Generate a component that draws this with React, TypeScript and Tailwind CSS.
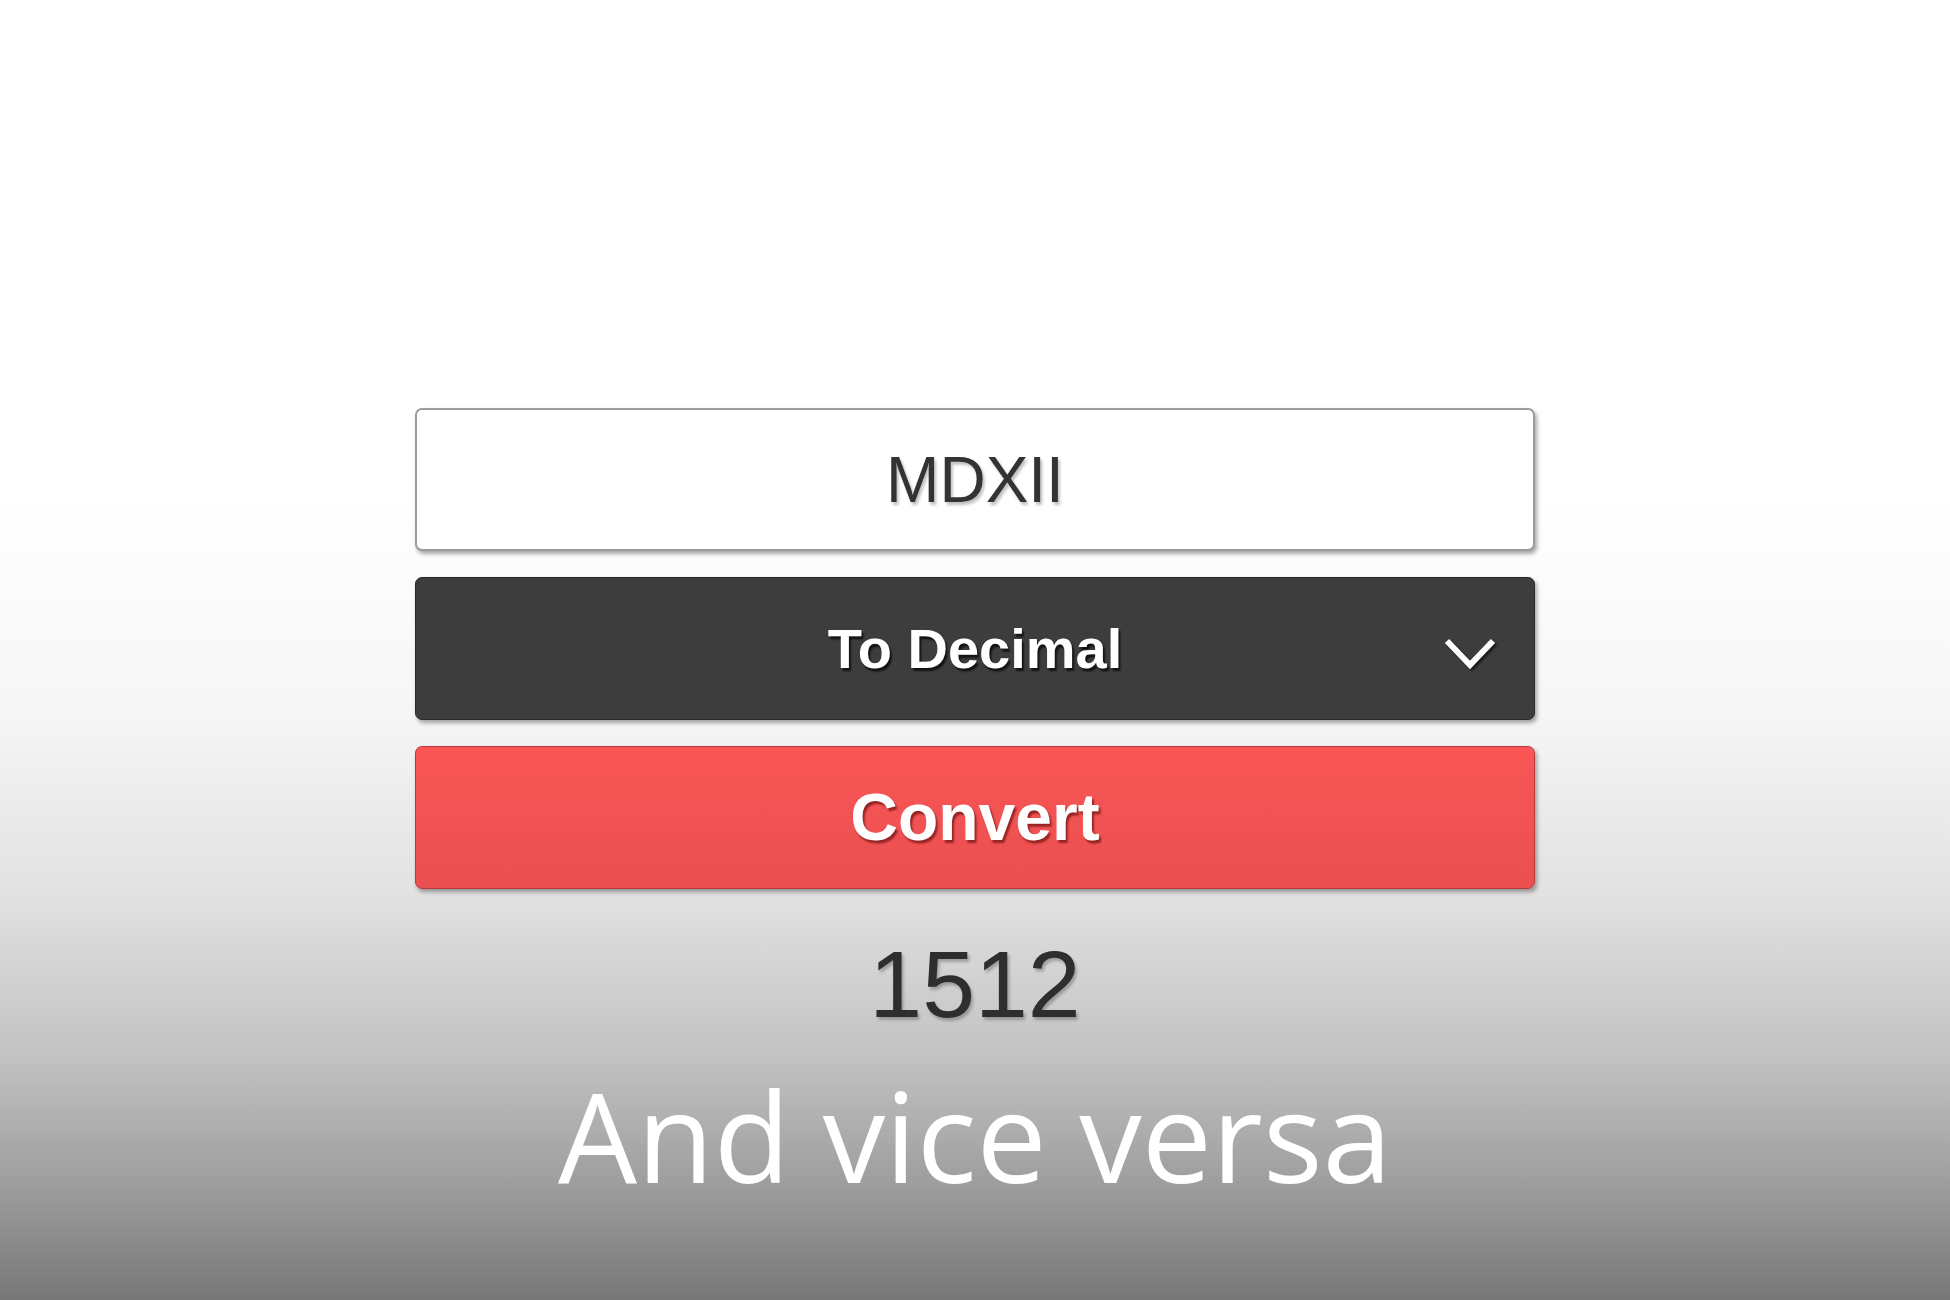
import React from 'react';

export default function App() {
  return (
    <div className="min-h-[1300px] w-full bg-[linear-gradient(to_bottom,#ffffff_0%,#ffffff_38%,#f6f6f6_55%,#e1e1e1_69%,#c3c3c3_81%,#9a9a9a_92%,#777777_100%)] font-['Liberation_Sans',Arial,sans-serif]">
      <div className="mx-auto flex w-[1120px] flex-col pt-[408px]">
        <input
          readOnly
          value="MDXII"
          className="h-[143px] w-full rounded-[7px] border-2 border-[#9c9c9c] bg-white text-center text-[64px] text-[#333333] shadow-[2px_3px_4px_rgba(0,0,0,0.35)] outline-none [text-shadow:2px_3px_3px_rgba(0,0,0,0.25)]"
        />

        <div className="relative mt-[26px] flex h-[143px] w-full items-center justify-center rounded-[7px] border border-[#2a2a2a] bg-[#3d3d3d] shadow-[2px_3px_4px_rgba(0,0,0,0.35)]">
          <span className="text-[56px] font-bold text-white [text-shadow:2px_3px_2px_rgba(0,0,0,0.7)]">To Decimal</span>
          <svg
            className="absolute right-[36px] top-[58px] drop-shadow-[2px_2px_1px_rgba(0,0,0,0.6)]"
            width="56"
            height="36"
            viewBox="0 0 56 36"
            fill="none"
          >
            <path d="M5 5 L28 29 L51 5" stroke="white" strokeWidth="6" strokeLinecap="butt" strokeLinejoin="miter" />
          </svg>
        </div>

        <button className="mt-[26px] flex h-[143px] w-full items-center justify-center rounded-[7px] border border-[#b83a3a] bg-[linear-gradient(to_bottom,#fa5656,#ea4f50)] shadow-[2px_3px_4px_rgba(0,0,0,0.35)]">
          <span className="text-[66px] font-bold text-white [text-shadow:2px_3px_2px_rgba(120,20,20,0.75)]">Convert</span>
        </button>

        <div className="mt-[48px] text-center text-[95px] leading-none text-[#2e2e2e] [text-shadow:2px_3px_3px_rgba(0,0,0,0.25)]">
          1512
        </div>

        <div className="mt-[40px] text-center font-['Open_Sans',sans-serif] text-[125px] leading-none text-white">
          And vice versa
        </div>
      </div>
    </div>
  );
}
